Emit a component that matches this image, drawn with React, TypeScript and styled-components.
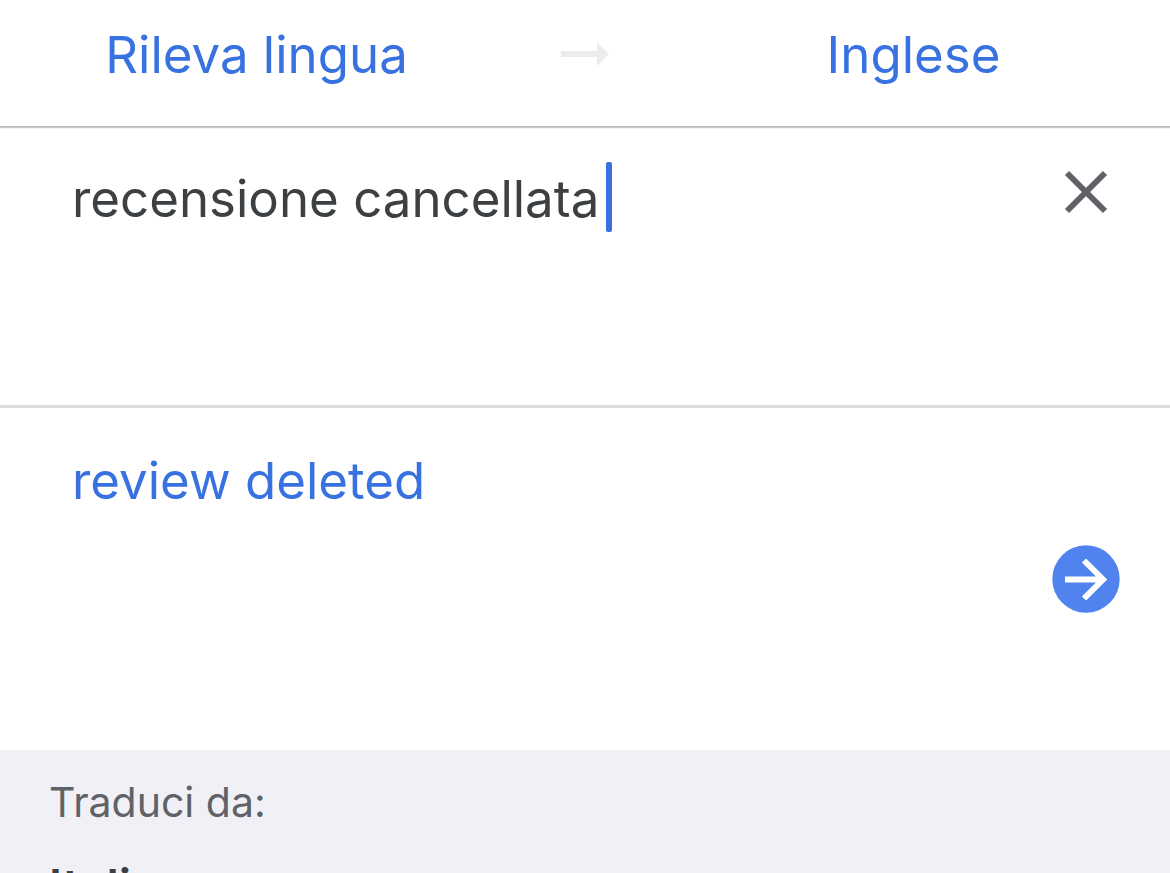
import React, { useState } from "react";
import styled, { createGlobalStyle } from "styled-components";

const GlobalStyle = createGlobalStyle`
  *, *::before, *::after { box-sizing: border-box; }
  body {
    margin: 0;
    background: #fff;
    font-family: Inter, "Liberation Sans", sans-serif;
  }
  button, input { font: inherit; color: inherit; }
`;

const Page = styled.main`
  display: flex;
  flex-direction: column;
  height: 100vh;
  overflow: hidden;
`;

const LanguageBar = styled.header`
  display: grid;
  grid-template-columns: 1fr 144px 1fr;
  align-items: start;
  justify-items: center;
  flex: none;
  padding: 18px 0 34px;
  box-shadow: 0 1px 0 #b9b9b9, 0 2px 1px #c8c8c8;
`;

const PlainButton = styled.button`
  padding: 0;
  border: 0;
  background: none;
  cursor: pointer;
`;

const LanguageButton = styled(PlainButton)`
  color: #3871e0;
  font-size: 51px;
  line-height: 74px;
`;

const Direction = styled.span`
  display: flex;
  align-items: center;
  height: 72px;
`;

const Panel = styled.section<{ $divided?: boolean }>`
  display: flex;
  justify-content: space-between;
  flex: none;
  min-height: ${(p) => (p.$divided ? 282 : 342)}px;
  padding: 36px 50px 36px 72px;
  border-bottom: ${(p) => (p.$divided ? "3px solid #dadce0" : "0")};
`;

const Field = styled.div`
  display: flex;
  align-items: flex-start;
  gap: 7px;
  min-width: 0;
`;

const SourceInput = styled.input`
  field-sizing: content;
  height: 74px;
  min-width: 0;
  padding: 0;
  border: 0;
  outline: 0;
  background: none;
  color: #3c4043;
  caret-color: transparent;
  font-size: 51px;
  line-height: 74px;
`;

const Caret = styled.span`
  flex: none;
  width: 6px;
  height: 70px;
  border-radius: 2px;
  background: #3871e0;
`;

const Result = styled.p`
  margin: 0;
  color: #3871e0;
  font-size: 51px;
  line-height: 74px;
`;

const IconButton = styled(PlainButton)<{ $low?: boolean }>`
  display: flex;
  align-items: center;
  justify-content: center;
  align-self: flex-start;
  flex: none;
  width: 68px;
  height: ${(p) => (p.$low ? 68 : 60)}px;
  margin-top: ${(p) => (p.$low ? 101 : 0)}px;
`;

const Suggestions = styled.section`
  flex: 1;
  min-height: 0;
  overflow: hidden;
  padding: 24px 49px;
  background: #f1f0f6;
`;

const SuggestionsTitle = styled.h2`
  margin: 0 0 28px;
  color: #5f6368;
  font-size: 41px;
  font-weight: 400;
  line-height: 56px;
`;

const SuggestionLink = styled.a`
  display: block;
  color: #3c4043;
  font-size: 47px;
  font-weight: 600;
  line-height: 56px;
  text-decoration: none;
`;

const DirectionArrow = () => (
  <svg width="50" height="26" viewBox="0 0 50 26" aria-hidden="true">
    <path d="M1 10h36V1l12 12-12 12v-9H1z" fill="#ececec" />
  </svg>
);

const CrossIcon = () => (
  <svg width="44" height="44" viewBox="0 0 44 44" aria-hidden="true">
    <path d="M3 3l38 38M41 3L3 41" stroke="#5f6368" strokeWidth="6" />
  </svg>
);

const GoIcon = () => (
  <svg width="68" height="68" viewBox="0 0 68 68" aria-hidden="true">
    <circle cx="34" cy="34" r="33.7" fill="#5083ee" />
    <path
      d="M13 34.5h38M32 15.5l19 19-19 19"
      fill="none"
      stroke="#fff"
      strokeWidth="6"
    />
  </svg>
);

export default function App() {
  const [text, setText] = useState("recensione cancellata");

  return (
    <>
      <GlobalStyle />
      <Page>
        <LanguageBar>
          <LanguageButton type="button">Rileva lingua</LanguageButton>
          <Direction>
            <DirectionArrow />
          </Direction>
          <LanguageButton type="button">Inglese</LanguageButton>
        </LanguageBar>
        <Panel $divided>
          <Field>
            <SourceInput
              aria-label="Testo da tradurre"
              spellCheck={false}
              value={text}
              onChange={(e) => setText(e.target.value)}
            />
            <Caret />
          </Field>
          <IconButton type="button" aria-label="Cancella" onClick={() => setText("")}>
            <CrossIcon />
          </IconButton>
        </Panel>
        <Panel>
          <Result lang="en">review deleted</Result>
          <IconButton type="button" aria-label="Apri traduzione" $low>
            <GoIcon />
          </IconButton>
        </Panel>
        <Suggestions>
          <SuggestionsTitle>Traduci da:</SuggestionsTitle>
          <SuggestionLink href="#italiano">Italiano</SuggestionLink>
        </Suggestions>
      </Page>
    </>
  );
}
